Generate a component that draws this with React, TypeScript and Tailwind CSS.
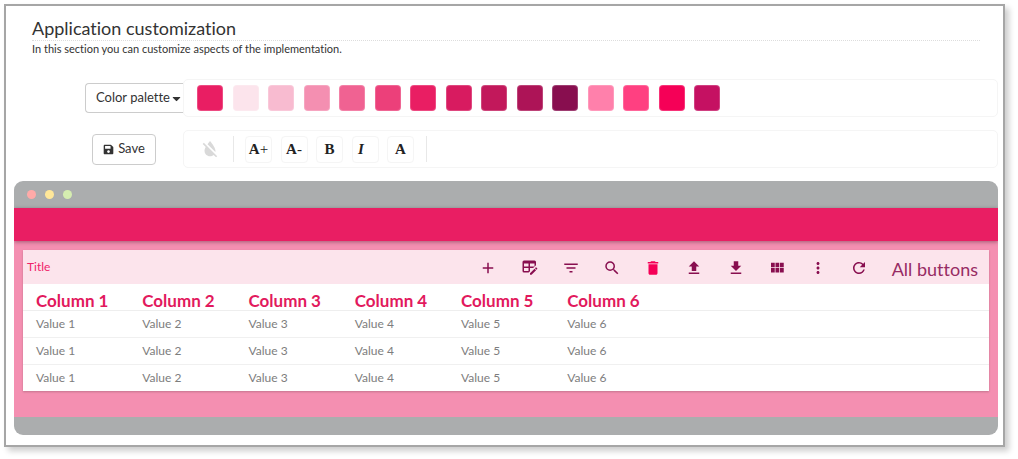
import type { ReactNode } from 'react';
import { FaCaretDown, FaSave } from 'react-icons/fa';
import {
  MdAdd,
  MdDelete,
  MdFilterList,
  MdFormatColorReset,
  MdMoreVert,
  MdRefresh,
  MdSearch,
} from 'react-icons/md';

const swatches = [
  '#e91e63', '#fce4ec', '#f8bbd0', '#f48fb1', '#f06292',
  '#ec407a', '#e91e63', '#d81b60', '#c2185b', '#ad1457',
  '#880e4f', '#ff80ab', '#ff4081', '#f50057', '#c51162',
];

const columns = [1, 2, 3, 4, 5, 6];
const rows = [1, 2, 3];

function PathIcon({ d }: { d: string }) {
  return (
    <svg viewBox="0 0 24 24" width="18" height="18" fill="currentColor" aria-hidden="true">
      <path d={d} />
    </svg>
  );
}

const tableEdit =
  'M21.7 13.35l-1 1-2.05-2.05 1-1c.21-.21.56-.21.77 0l1.28 1.28c.21.21.21.56 0 .77M12 18.94l6.07-6.06 2.05 2.05L14.06 21H12v-2.06M4 2h14a2 2 0 0 1 2 2v4.17L16.17 12H12v4.17L10.17 18H4a2 2 0 0 1-2-2V4a2 2 0 0 1 2-2m0 4v4h6V6H4m8 0v4h6V6h-6m-8 6v4h6v-4H4z';

const actions: { label: string; icon: ReactNode; className?: string }[] = [
  { label: 'Add', icon: <MdAdd size={18} /> },
  { label: 'Edit table', icon: <PathIcon d={tableEdit} /> },
  { label: 'Filter', icon: <MdFilterList size={18} /> },
  { label: 'Search', icon: <MdSearch size={18} /> },
  { label: 'Delete', icon: <MdDelete size={18} />, className: 'text-[#f50057]' },
  { label: 'Upload', icon: <PathIcon d="M9 16h6v-6h4l-7-7-7 7h4zm-4 2h14v2H5z" /> },
  { label: 'Download', icon: <PathIcon d="M19 9h-4V3H9v6H5l7 7 7-7zM5 18v2h14v-2H5z" /> },
  { label: 'Columns', icon: <PathIcon d="M4 11h5V5H4v6zm0 7h5v-6H4v6zm6 0h5v-6h-5v6zm6 0h5v-6h-5v6zm-6-7h5V5h-5v6zm6-6v6h5V5h-5z" /> },
  { label: 'More', icon: <MdMoreVert size={18} /> },
  { label: 'Refresh', icon: <MdRefresh size={18} /> },
];

const formats: { label: string; content: ReactNode }[] = [
  { label: 'Increase size', content: <>A<span className="font-normal">+</span></> },
  { label: 'Decrease size', content: <>A<span className="font-normal">-</span></> },
  { label: 'Bold', content: 'B' },
  { label: 'Italic', content: <i className="pr-2">I</i> },
  { label: 'Font color', content: 'A' },
];

function Toolbar() {
  return (
    <div className="flex h-[38px] flex-1 items-center rounded-[5px] border border-[#f5f5f5] bg-white pl-[15px]">
      <button aria-label="Reset color" className="text-[#d9d9d9]">
        <MdFormatColorReset size={22} />
      </button>
      <div className="ml-3 h-[26px] w-px bg-[#e8e8e8]" />
      <div className="ml-[11px] flex w-[169px] justify-between">
        {formats.map((format) => (
          <button
            key={format.label}
            aria-label={format.label}
            className="flex size-[27px] items-center justify-center rounded-[4px] border border-[#f5f5f5] font-['Liberation_Serif',serif] text-[15px] font-bold text-[#222]"
          >
            {format.content}
          </button>
        ))}
      </div>
      <div className="ml-3 h-[26px] w-px bg-[#e8e8e8]" />
    </div>
  );
}

function PreviewTable() {
  return (
    <table className="w-full table-fixed text-left">
      <colgroup>
        <col className="w-[13px]" />
        {columns.map((n) => (
          <col key={n} className="w-[11%]" />
        ))}
        <col />
      </colgroup>
      <thead>
        <tr className="h-[26px] border-b border-[#eee]">
          <td />
          {columns.map((n) => (
            <th key={n} className="p-0 pt-2 text-[17px] leading-[18px] font-bold whitespace-nowrap text-[#e2195d]">
              Column {n}
            </th>
          ))}
          <td />
        </tr>
      </thead>
      <tbody className="text-xs text-[#7d7d7d]">
        {rows.map((row) => (
          <tr key={row} className="h-[27px] border-b border-[#f0f0f0] last:h-[26px] last:border-b-0">
            <td />
            {columns.map((n) => (
              <td key={n} className="p-0">Value {n}</td>
            ))}
            <td />
          </tr>
        ))}
      </tbody>
    </table>
  );
}

function PreviewWindow() {
  return (
    <section className="overflow-hidden rounded-[9px] bg-[#abadae]">
      <div className="flex h-[27px] items-center gap-[9px] pl-[13px]">
        <span className="size-[9px] rounded-full bg-[#ffaaa8]" />
        <span className="size-[9px] rounded-full bg-[#ffe799]" />
        <span className="size-[9px] rounded-full bg-[#d5edb0]" />
      </div>
      <div className="bg-[#f48fb1] pb-[26px]">
        <div className="h-[33px] bg-[#e91e63] shadow-[0_1px_4px_rgba(0,0,0,0.35)]" />
        <div className="mx-[9px] mt-[9px] bg-white shadow-[0_1px_2px_rgba(0,0,0,0.2)]">
          <div className="flex h-[34px] items-center bg-[#fce4ec] pr-[11px] pl-1 text-[#880e4f]">
            <h2 className="flex-1 text-xs text-[#f0226a]">Title</h2>
            <div className="grid w-[412px] grid-cols-10 pt-0.5">
              {actions.map((action) => (
                <button
                  key={action.label}
                  aria-label={action.label}
                  className={`flex justify-center ${action.className ?? ''}`}
                >
                  {action.icon}
                </button>
              ))}
            </div>
            <span className="ml-3 pt-1 text-lg text-[#972b63]">All buttons</span>
          </div>
          <PreviewTable />
        </div>
      </div>
      <div className="h-[18px]" />
    </section>
  );
}

export default function App() {
  return (
    <div className="bg-white pt-1 pr-[13px] pb-3 pl-1 font-['Lato',sans-serif] text-[#333] [font-variant-ligatures:none]">
      <main className="border-2 border-[#a6a6a6] bg-white pt-[10px] pr-[5px] pb-[10px] pl-2 shadow-[4px_4px_6px_rgba(0,0,0,0.2)]">
        <header className="mr-[18px] ml-[18px]">
          <h1 className="border-b border-dotted border-[#ddd] text-lg leading-6">Application customization</h1>
          <p className="text-[11px] leading-4">In this section you can customize aspects of the implementation.</p>
        </header>

        <div className="mt-[22px] flex items-center">
          <div className="flex w-[169px] justify-end">
            <button className="flex h-[30px] w-[98px] items-center rounded-l-[4px] border border-r-0 border-[#ccc] pl-[10px] text-[13px] whitespace-nowrap">
              Color palette
              <FaCaretDown size={13} />
            </button>
          </div>
          <div className="flex h-[38px] flex-1 items-center rounded-[5px] border border-[#f5f5f5] bg-white pl-[13px]">
            <div className="flex w-[523px] justify-between">
              {swatches.map((color, i) => (
                <button
                  key={i}
                  aria-label={`Color ${color}`}
                  className="size-[26px] rounded-[4px] border border-white/20"
                  style={{ backgroundColor: color }}
                />
              ))}
            </div>
          </div>
        </div>

        <div className="mt-[13px] flex items-center">
          <div className="flex w-[169px] justify-end pr-[27px]">
            <button className="flex h-[31px] w-16 items-center justify-center gap-1 rounded-[4px] border border-[#ccc] text-[13px]">
              <FaSave size={11} />
              Save
            </button>
          </div>
          <Toolbar />
        </div>

        <div className="mt-[13px]">
          <PreviewWindow />
        </div>
      </main>
    </div>
  );
}
